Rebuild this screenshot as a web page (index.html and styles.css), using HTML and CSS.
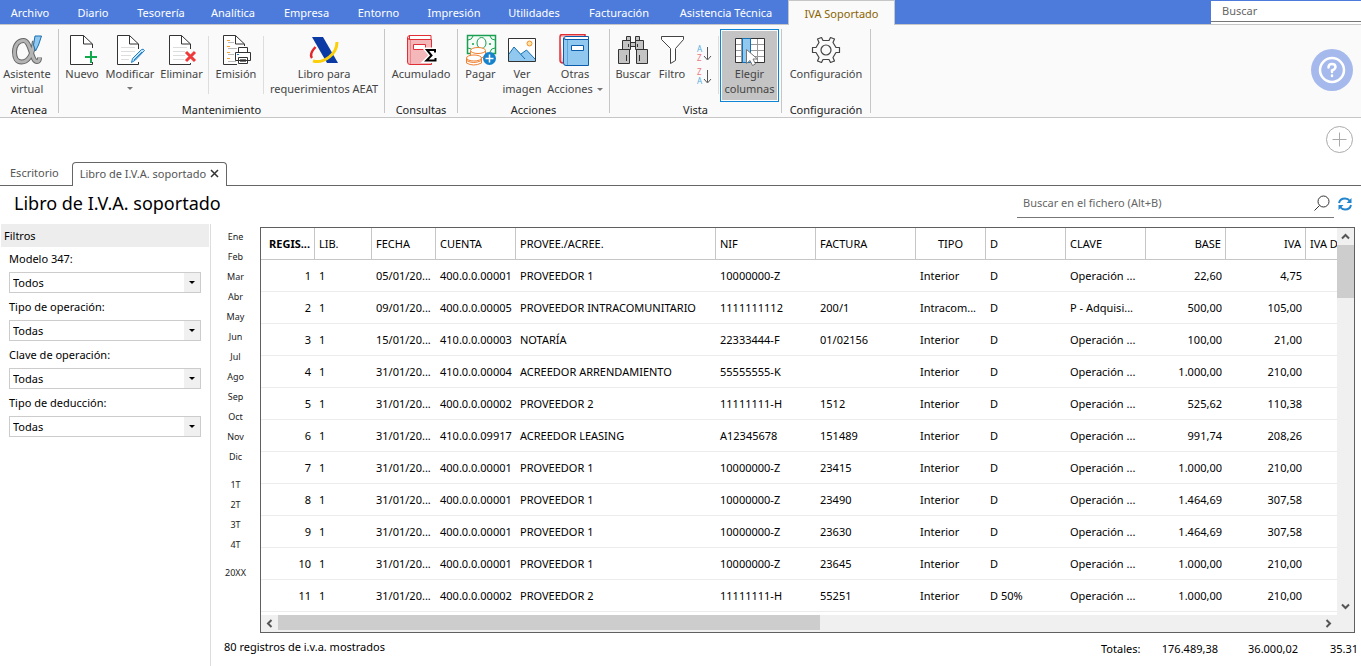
FILE: index.html
```html
<!DOCTYPE html>
<html lang="es">
<head>
<meta charset="utf-8">
<title>Libro de I.V.A. soportado</title>
<link rel="stylesheet" href="styles.css">
</head>
<body>
<header class="menubar">
  <nav class="menu">
    <a href="#">Archivo</a><a href="#">Diario</a><a href="#">Tesorería</a><a href="#">Analítica</a><a href="#">Empresa</a><a href="#">Entorno</a><a href="#">Impresión</a><a href="#">Utilidades</a><a href="#">Facturación</a><a href="#">Asistencia Técnica</a><a href="#" class="current">IVA Soportado</a>
  </nav>
  <input class="menu-search" type="search" placeholder="Buscar" aria-label="Buscar">
</header>

<section class="ribbon">
  <div class="group">
    <div class="tools tools-atenea">
      <button class="tool"><svg class="icon" viewBox="0 0 32 32" fill="none"><path d="M23.500 7C22 18 18 28 10.500 28C5.500 28 3.500 23.500 3.500 18C3.500 11 7.500 6.500 12.500 6.500C20 6.500 20 27.500 26 27.500C28 27.500 28.500 26 28.500 23.500" stroke="#666" stroke-width="5"/><path d="M23.500 7C22 18 18 28 10.500 28C5.500 28 3.500 23.500 3.500 18C3.500 11 7.500 6.500 12.500 6.500C20 6.500 20 27.500 26 27.500C28 27.500 28.500 26 28.500 24" stroke="#b4b4b4" stroke-width="3"/><path d="M24 2H30.500L27.500 11L24.500 17L22.500 11Z" fill="#90c8f0" stroke="#1a6fb0"/></svg><span>Asistente<br>virtual</span></button>
    </div>
    <h2>Atenea</h2>
  </div>
  <div class="group">
    <div class="tools tools-mant">
      <button class="tool"><svg class="icon" viewBox="0 0 32 32"><path d="M26.500 14V10L17.500 1.500H4.500V30.500H26.500V28M17.500 1.500V10H26.500" fill="#fff" stroke="#333"/><path d="M25 17v12M19 23h12" stroke="#12a84c" stroke-width="2"/></svg><span>Nuevo</span></button>
      <button class="tool"><svg class="icon" viewBox="0 0 32 32"><path d="M24.500 15V10L15.500 1.500H3.500V30.500H24.500V28M15.500 1.500V10H24.500" fill="#fff" stroke="#333"/><path d="M7 13.500h14M7 17.500h14M7 21.500h10M7 25.500h8" stroke="#ddd"/><path d="M17.500 28.500l1-4 9-9q2-1 3 1l-9 9.500zM20 26l8-8" fill="#c4e3f8" stroke="#2080c8"/></svg><span>Modificar</span><i class="caret"></i></button>
      <button class="tool"><svg class="icon" viewBox="0 0 32 32"><path d="M24.500 15V10L15.500 1.500H3.500V30.500H24.500V29M15.500 1.500V10H24.500" fill="#fff" stroke="#333"/><path d="M7 13.500h14M7 17.500h12M7 21.500h12M7 25.500h11" stroke="#ddd"/><path d="M20 18l9 9M29 18l-9 9" stroke="#ee3a3a" stroke-width="3"/></svg><span>Eliminar</span></button>
      <i class="rule"></i>
      <button class="tool"><svg class="icon" viewBox="0 0 32 32"><path d="M24.500 12V10L15.500 1.500H3.500V30.500H17M15.500 1.500V10H24.500" fill="#fff" stroke="#333"/><path d="M7 6.500h3M7 12.500h3M7 18.500h3M7 24.500h3" stroke="#f5a030" stroke-width="1"/><path d="M8 8.500h6M8 14.500h9M8 20.500h6M8 27.500h8" stroke="#bbb"/><path d="M18.500 18V13.500h9V18M15.500 18.500h15v8h-15z M18.500 23.500h9v6h-9z" fill="#fff" stroke="#333"/><path d="M20 25.500h6M20 27.500h6" stroke="#777"/><path d="M17 20.500h2" stroke="#2080c8"/></svg><span>Emisión</span></button>
      <i class="rule"></i>
      <button class="tool"><svg class="icon" viewBox="0 0 32 32"><path d="M4 3H15L30 29H19Z" fill="#0b3aa5"/><path d="M7.500 13Q1 20 4 24" fill="none" stroke="#e2272c" stroke-width="2.500"/><path d="M5 27C16 30 29 20 29 8" fill="none" stroke="#fbd00a" stroke-width="3"/></svg><span>Libro para<br>requerimientos AEAT</span></button>
    </div>
    <h2>Mantenimiento</h2>
  </div>
  <div class="group">
    <div class="tools tools-cons">
      <button class="tool"><svg class="icon" viewBox="0 0 32 32"><path d="M4.500 1.500H26V5.500H4.500zM2.500 4Q2.500 1.500 5 1.500M2.500 4Q3 5.500 5 5.500" fill="#fff" stroke="#e03036"/><path d="M2.500 4V28Q2.500 30.500 5 30.500H26.500V5.500H5Q3 5.500 2.500 4z" fill="#f5b8ba" stroke="#e03036"/><path d="M8.500 10.500h12v5h-12z" fill="#fff" stroke="#e03036"/><path d="M5.500 6v24" stroke="#ee8588"/><path d="M30 19V16H22L26.500 21.500L21.500 26.500H30.500V23.500" fill="none" stroke="#fff" stroke-width="5"/><path d="M30 18.500V16H22L26.500 21.500L21.500 26.500H30.500V24" fill="none" stroke="#000" stroke-width="2"/></svg><span>Acumulado</span></button>
    </div>
    <h2>Consultas</h2>
  </div>
  <div class="group">
    <div class="tools tools-acc">
      <button class="tool"><svg class="icon" viewBox="0 0 32 32"><path d="M2.500 1.500h28v18h-28z" fill="#f4fcf7" stroke="#18a050" stroke-width="1.500"/><ellipse cx="16.500" cy="9" rx="4.500" ry="5.500" fill="#fff" stroke="#18a050"/><path d="M3 6q4 0 5-4M30 6q-4 0-5-4M3 14q4 0 5 4M30 14q-4 0-5 4" fill="none" stroke="#18a050"/><circle cx="8" cy="10" r="1" fill="#18a050"/><circle cx="25" cy="10" r="1" fill="#18a050"/><g fill="#fff" stroke="#f08030"><path d="M5.500 17v5q7 5 15 0v-5z"/><ellipse cx="13" cy="16.500" rx="7.500" ry="3"/><path d="M1.500 24v5q7 4 15 0v-5z"/><ellipse cx="9" cy="24" rx="7.500" ry="3"/><path d="M1.500 26.500q7 4 15 0" fill="none"/></g><circle cx="24.500" cy="24.500" r="6.500" fill="#1682cc"/><path d="M20.500 24.500h8M24.500 20.500v8" stroke="#fff" stroke-width="1.500"/></svg><span>Pagar</span></button>
      <button class="tool"><svg class="icon" viewBox="0 0 32 32"><path d="M2.500 4.500h27v23h-27z" fill="#fff"/><path d="M3 20L8 13L15 20L20.500 16L29 25V27H3z" fill="#90c8f0"/><path d="M3 20L8 13L19 25M15 20L20.500 16L29 25" fill="none" stroke="#1470b0"/><circle cx="23.500" cy="9.500" r="2.500" fill="#ffe4a0" stroke="#f09030"/><path d="M2.500 4.500h27v23h-27z" fill="none" stroke="#333"/></svg><span>Ver<br>imagen</span></button>
      <button class="tool"><svg class="icon" viewBox="0 0 32 32"><path d="M1 3Q1 .500 3 .500H26V4M1 3V26Q1 29 4 29" fill="#f8b8ba" stroke="#e03036" stroke-width="1.500"/><path d="M4.500 5Q4.500 2.500 7 2.500H29.500V5.500H7Q5 5.500 4.500 4z" fill="#fff" stroke="#0b5cab"/><path d="M4.500 4V29Q4.500 31.500 7 31.500H29.500V5.500H7Q5 5.500 4.500 4z" fill="#90c8f0" stroke="#0b5cab"/><path d="M8.500 6v25" stroke="#5aa5dc"/><path d="M12.500 11.500h12v5h-12z" fill="#fff" stroke="#0b5cab"/></svg><span>Otras<br>Acciones<i class="caret caret-inline"></i></span></button>
    </div>
    <h2>Acciones</h2>
  </div>
  <div class="group">
    <div class="tools tools-vista">
      <button class="tool"><svg class="icon" viewBox="0 0 32 32"><g fill="#c4c4c4" stroke="#333"><path d="M9.500 2.500h4v4h-4zM18.500 2.500h4v4h-4zM5.500 6.500h8v9h-8zM18.500 6.500h8v9h-8zM13.500 8.500h5v4h-5zM1.500 15.500h11v14h-11zM19.500 15.500h11v14h-11z"/></g><path d="M9.500 21v6M22.500 21v6M11.500 10v3M20.500 10v3" stroke="#333"/></svg><span>Buscar</span></button>
      <button class="tool"><svg class="icon" viewBox="0 0 32 32"><path d="M5.500 2.500h22v3l-8 9v12l-5 3v-15l-9-9z" fill="#fff" stroke="#444"/></svg><span>Filtro</span></button>
      <div class="sorts">
        <button aria-label="Orden ascendente"><svg viewBox="0 0 16 20" width="16" height="20"><text x="1" y="8" fill="#58aee0">A</text><text x="1" y="17" fill="#ee7780">Z</text><path d="M11.500 3v12M8 12l3.500 4L15 12" fill="none" stroke="#555"/></svg></button>
        <button aria-label="Orden descendente"><svg viewBox="0 0 16 20" width="16" height="20"><text x="1" y="8" fill="#ee7780">Z</text><text x="1" y="17" fill="#58aee0">A</text><path d="M11.500 3v12M8 12l3.500 4L15 12" fill="none" stroke="#555"/></svg></button>
      </div>
      <i class="rule"></i>
      <button class="tool pressed"><svg class="icon" viewBox="0 0 32 32"><path d="M1.500 4.500h29v24h-29z" fill="#fff"/><path d="M1 10.500h30M1 16.500h30M1 22.500h30M7.500 4v24M23.500 4v24" stroke="#999"/><path d="M1.500 4.500h29v24h-29z" fill="none" stroke="#333"/><path d="M8.500 4.500h8v24h-8z" fill="#90c8f0" stroke="#1470b0"/><path d="M12.500 15.500v14l3.500-3 2.500 5 3-1.500-2.500-5h4.500z" fill="#fff" stroke="#777"/></svg><span>Elegir<br>columnas</span></button>
    </div>
    <h2>Vista</h2>
  </div>
  <div class="group">
    <div class="tools tools-conf">
      <button class="tool"><svg class="icon" viewBox="0 0 32 32"><g fill="none" stroke="#444" stroke-width="1.200" stroke-linejoin="round"><path d="M13 6.500H19L20.500 3.500L24.500 5L23 8.500L26 13.500H29.500V18.500H26L23 23.500L24.500 27L20.500 28.500L19 25.500H13L11.500 28.500L7.500 27L9 23.500L6 18.500H2.500V13.500H6L9 8.500L7.500 5L11.500 3.500Z"/><circle cx="16" cy="16" r="5"/></g></svg><span>Configuración</span></button>
    </div>
    <h2>Configuración</h2>
  </div>
  <button class="help" aria-label="Ayuda"><svg viewBox="0 0 28 28" width="28" height="28" fill="none" stroke="#fff" stroke-width="2.500" stroke-linecap="round"><circle cx="14" cy="14" r="12"/><path d="M10.500 11.500Q10.500 8 14 8Q17.500 8 17.500 11Q17.500 13 14 14.500V16M14 19.500V20"/></svg></button>
</section>

<div class="add-row"><button class="add" aria-label="Añadir"><svg viewBox="0 0 27 27" width="27" height="27" fill="none" stroke="#aaa"><circle cx="13.500" cy="13.500" r="13"/><path d="M6.500 13.500h14M13.500 6.500v14"/></svg></button></div>
<nav class="doc-tabs">
  <a href="#" class="doc-tab">Escritorio</a>
  <div class="doc-tab open"><a href="#">Libro de I.V.A. soportado</a><button aria-label="Cerrar"><svg viewBox="0 0 9 9" width="9" height="9"><path d="M1 1l7 7M8 1l-7 7" stroke="#333" stroke-width="1.500"/></svg></button></div>
</nav>

<div class="title-row">
  <h1>Libro de I.V.A. soportado</h1>
  <div class="file-search">
    <input type="search" placeholder="Buscar en el fichero (Alt+B)" aria-label="Buscar en el fichero">
    <svg viewBox="0 0 16 16" width="16" height="16" fill="none" stroke="#333"><circle cx="9.500" cy="6.500" r="5.500"/><path d="M5.500 10.500L.500 15.500"/></svg>
  </div>
  <button class="refresh" aria-label="Actualizar"><svg viewBox="0 0 14 14" width="14" height="14" fill="none" stroke="#2386cc" stroke-width="2"><path d="M1 6Q2 1.500 7 1.500Q10 1.500 12 4M13 8Q12 12.500 7 12.500Q4 12.500 2 10"/><path d="M13.500 1v5h-5zM.500 13V8h5z" fill="#2386cc" stroke="none"/></svg></button>
</div>

<div class="workspace">
  <aside class="filters">
    <h2>Filtros</h2>
    <label for="f1">Modelo 347:</label><div class="combo"><select id="f1"><option>Todos</option></select></div>
    <label for="f2">Tipo de operación:</label><div class="combo"><select id="f2"><option>Todas</option></select></div>
    <label for="f3">Clave de operación:</label><div class="combo"><select id="f3"><option>Todas</option></select></div>
    <label for="f4">Tipo de deducción:</label><div class="combo"><select id="f4"><option>Todas</option></select></div>
  </aside>
  <main class="content">
    <div class="book">
      <nav class="periods">
        <div><a href="#">Ene</a><a href="#">Feb</a><a href="#">Mar</a><a href="#">Abr</a><a href="#">May</a><a href="#">Jun</a><a href="#">Jul</a><a href="#">Ago</a><a href="#">Sep</a><a href="#">Oct</a><a href="#">Nov</a><a href="#">Dic</a></div>
        <div><a href="#">1T</a><a href="#">2T</a><a href="#">3T</a><a href="#">4T</a></div>
        <div><a href="#">20XX</a></div>
      </nav>
      <div class="grid-frame">
        <div class="grid-view">
          <table>
            <colgroup><col class="w54"><col class="w57"><col class="w64"><col class="w80"><col class="w200"><col class="w100"><col class="w100"><col class="w70"><col class="w80"><col class="w80"><col class="w80"><col class="w80"><col class="w80"></colgroup>
            <thead><tr><th class="num sorted">REGIS...</th><th>LIB.</th><th>FECHA</th><th>CUENTA</th><th>PROVEE./ACREE.</th><th>NIF</th><th>FACTURA</th><th class="mid">TIPO</th><th>D</th><th>CLAVE</th><th class="num">BASE</th><th class="num">IVA</th><th>IVA D</th></tr></thead>
            <tbody>
              <tr><td class="num">1</td><td>1</td><td>05/01/20...</td><td>400.0.0.00001</td><td>PROVEEDOR 1</td><td>10000000-Z</td><td></td><td>Interior</td><td>D</td><td>Operación ...</td><td class="num">22,60</td><td class="num">4,75</td><td></td></tr>
              <tr><td class="num">2</td><td>1</td><td>09/01/20...</td><td>400.0.0.00005</td><td>PROVEEDOR INTRACOMUNITARIO</td><td>1111111112</td><td>200/1</td><td>Intracom...</td><td>D</td><td>P - Adquisi...</td><td class="num">500,00</td><td class="num">105,00</td><td></td></tr>
              <tr><td class="num">3</td><td>1</td><td>15/01/20...</td><td>410.0.0.00003</td><td>NOTARÍA</td><td>22333444-F</td><td>01/02156</td><td>Interior</td><td>D</td><td>Operación ...</td><td class="num">100,00</td><td class="num">21,00</td><td></td></tr>
              <tr><td class="num">4</td><td>1</td><td>31/01/20...</td><td>410.0.0.00004</td><td>ACREEDOR ARRENDAMIENTO</td><td>55555555-K</td><td></td><td>Interior</td><td>D</td><td>Operación ...</td><td class="num">1.000,00</td><td class="num">210,00</td><td></td></tr>
              <tr><td class="num">5</td><td>1</td><td>31/01/20...</td><td>400.0.0.00002</td><td>PROVEEDOR 2</td><td>11111111-H</td><td>1512</td><td>Interior</td><td>D</td><td>Operación ...</td><td class="num">525,62</td><td class="num">110,38</td><td></td></tr>
              <tr><td class="num">6</td><td>1</td><td>31/01/20...</td><td>410.0.0.09917</td><td>ACREEDOR LEASING</td><td>A12345678</td><td>151489</td><td>Interior</td><td>D</td><td>Operación ...</td><td class="num">991,74</td><td class="num">208,26</td><td></td></tr>
              <tr><td class="num">7</td><td>1</td><td>31/01/20...</td><td>400.0.0.00001</td><td>PROVEEDOR 1</td><td>10000000-Z</td><td>23415</td><td>Interior</td><td>D</td><td>Operación ...</td><td class="num">1.000,00</td><td class="num">210,00</td><td></td></tr>
              <tr><td class="num">8</td><td>1</td><td>31/01/20...</td><td>400.0.0.00001</td><td>PROVEEDOR 1</td><td>10000000-Z</td><td>23490</td><td>Interior</td><td>D</td><td>Operación ...</td><td class="num">1.464,69</td><td class="num">307,58</td><td></td></tr>
              <tr><td class="num">9</td><td>1</td><td>31/01/20...</td><td>400.0.0.00001</td><td>PROVEEDOR 1</td><td>10000000-Z</td><td>23630</td><td>Interior</td><td>D</td><td>Operación ...</td><td class="num">1.464,69</td><td class="num">307,58</td><td></td></tr>
              <tr><td class="num">10</td><td>1</td><td>31/01/20...</td><td>400.0.0.00001</td><td>PROVEEDOR 1</td><td>10000000-Z</td><td>23645</td><td>Interior</td><td>D</td><td>Operación ...</td><td class="num">1.000,00</td><td class="num">210,00</td><td></td></tr>
              <tr><td class="num">11</td><td>1</td><td>31/01/20...</td><td>400.0.0.00002</td><td>PROVEEDOR 2</td><td>11111111-H</td><td>55251</td><td>Interior</td><td>D 50%</td><td>Operación ...</td><td class="num">1.000,00</td><td class="num">210,00</td><td></td></tr>
            </tbody>
          </table>
        </div>
        <div class="vscroll">
          <button aria-label="Subir"><svg viewBox="0 0 9 9" width="9" height="9"><path d="M1 6.500l3.500-3.500L8 6.500"/></svg></button>
          <div class="track"><div class="thumb"></div></div>
          <button aria-label="Bajar"><svg viewBox="0 0 9 9" width="9" height="9"><path d="M1 2.500L4.500 6 8 2.500"/></svg></button>
        </div>
        <div class="hscroll">
          <button aria-label="Izquierda"><svg viewBox="0 0 9 9" width="9" height="9"><path d="M6.500 1L3 4.500 6.500 8"/></svg></button>
          <div class="track"><div class="thumb"></div></div>
          <button aria-label="Derecha"><svg viewBox="0 0 9 9" width="9" height="9"><path d="M2.500 1L6 4.500 2.500 8"/></svg></button>
        </div>
        <div class="corner"></div>
      </div>
    </div>
    <footer class="status">
      <span>80 registros de i.v.a. mostrados</span>
      <div class="totals"><span>Totales:</span><span>176.489,38</span><span>36.000,02</span><span class="cut">35.31</span></div>
    </footer>
  </main>
</div>
</body>
</html>
```
FILE: styles.css
```css
* { box-sizing: border-box; }
body { margin: 0; min-height: 100vh; display: flex; flex-direction: column; background: #fff; color: #000; font: 11px/15px "Noto Sans", "Open Sans", sans-serif; overflow-x: hidden; }
button { margin: 0; padding: 0; border: 0; background: none; font: inherit; color: inherit; }
a { color: inherit; text-decoration: none; }
h1, h2 { margin: 0; font-weight: normal; }
h2 { font-size: 11px; }
svg { display: block; }
input { font: inherit; outline: 0; border: 0; background: none; }
input::placeholder { color: #666; opacity: 1; }

.menubar { display: flex; justify-content: space-between; align-items: flex-start; background: #4d7bdc; height: 25px; border-bottom: 1px solid #c6c6c6; }
.menu { display: grid; grid-template-columns: 60px 66px 70px 74px 73px 71px 80px 80px 90px 124px 107px; height: 25px; color: #fff; }
.menu a { display: flex; align-items: center; justify-content: center; white-space: nowrap; }
.menu .current { background: #fafafa; border: 1px solid #c6c6c6; border-bottom: 0; color: #8a6400; }
.menu-search { width: 150px; height: 24px; padding: 0 11px 4px; border-top: 1px solid #4d7bdc; background: linear-gradient(#777, #777) 0 20px / 100% 1px no-repeat #fff; }

.ribbon { display: flex; height: 93px; padding-top: 4px; background: #fafafa; border-bottom: 1px solid #c6c6c6; color: #444; }
.group { display: flex; flex-direction: column; height: 88px; padding-right: 1px; background: linear-gradient(#c6c6c6, #c6c6c6) right top / 1px 84px no-repeat; }
.group h2 { margin-top: auto; text-align: center; color: #222; }
.tools { display: grid; }
.tools-atenea { grid-template-columns: 54px; padding-right: 4px; }
.tools-mant { grid-template-columns: 46px 50px 53px 1px 54px 1px 120px; }
.tools-cons { grid-template-columns: 72px; }
.tools-acc { grid-template-columns: 45px 38px 68px; }
.tools-vista { grid-template-columns: 40px 36px 26px 1px 59px; padding: 0 2px 0 3px; column-gap: 1px; }
.tools-conf { grid-template-columns: 88px; }
.tool { display: flex; flex-direction: column; align-items: center; height: 73px; padding-top: 5px; white-space: nowrap; text-align: center; }
.tool.pressed { background: #c4c4c4; border: 1px solid #0e86d4; padding-top: 4px; box-shadow: inset 0 0 0 1px #fafafa; }
.icon { width: 32px; height: 32px; flex: none; }
.rule { width: 1px; height: 58px; margin-top: 7px; background: #ddd; }
.caret { width: 0; border: 3px solid transparent; border-top-color: #777; border-bottom: 0; margin-top: 6px; }
.caret-inline { display: inline-block; margin: 0 0 2px 4px; }
.sorts { display: flex; flex-direction: column; gap: 3px; padding: 15px 0 0 5px; font-size: 8px; }
.help { width: 42px; height: 42px; margin: 20px 8px 0 auto; border-radius: 50%; background: #a5b9ec; display: grid; place-items: center; }

.add-row { display: flex; justify-content: flex-end; height: 44px; padding: 8px 8px 0; }
.add { height: 27px; }
.doc-tabs { display: flex; height: 24px; padding-left: 10px; color: #555; background: linear-gradient(#666, #666) bottom / 100% 1px no-repeat; }
.doc-tab { line-height: 21px; }
.doc-tab.open { display: flex; align-items: center; gap: 4px; margin-left: 13px; padding: 0 7px 2px; border: 1px solid #666; border-bottom: 0; border-radius: 4px 4px 0 0; background: #fff; }
.title-row { display: flex; align-items: flex-start; height: 38px; padding: 4px 9px 0 14px; }
h1 { font-size: 18px; line-height: 27px; margin-right: auto; }
.file-search { display: flex; align-items: center; width: 317px; height: 28px; padding: 0 4px 2px 6px; border-bottom: 1px solid #777; }
.file-search input { flex: 1; padding: 0; }
.refresh { margin: 7px 0 0 4px; }

.workspace { display: flex; flex: 1; }
.filters { flex: none; width: 211px; padding: 0 9px; border-right: 1px solid #ddd; }
.filters h2 { margin: 0 -8px 1px; padding: 0 3px; line-height: 23px; background: #ededed; }
.filters label { display: block; line-height: 21px; padding-bottom: 3px; }
.combo { position: relative; width: 192px; height: 21px; margin-bottom: 3px; }
.combo select { appearance: none; width: 100%; height: 100%; padding: 0 3px; border: 1px solid #ccc; border-radius: 0; color: #000; font: inherit; background: linear-gradient(#f0f0f0, #f0f0f0) right / 16px 100% no-repeat #fff; }
.combo::after { content: ""; position: absolute; right: 6px; top: 9px; border: 3px solid transparent; border-top-color: #000; border-bottom: 0; pointer-events: none; }
.content { flex: 1; min-width: 0; }
.book { display: flex; padding: 3px 6px 0 0; }
.periods { flex: none; width: 49px; font-size: 9px; text-align: center; color: #222; }
.periods div { margin-bottom: 8px; }
.periods a { display: block; line-height: 20px; }
.grid-frame { flex: 1; min-width: 0; display: grid; grid-template-columns: minmax(0, 1fr) 17px; border: 1px solid #606060; }
.grid-view { overflow: hidden; padding-bottom: 3px; }
table { width: 1125px; table-layout: fixed; border-collapse: separate; border-spacing: 0; }
.w54 { width: 54px; } .w57 { width: 57px; } .w64 { width: 64px; } .w70 { width: 70px; } .w80 { width: 80px; } .w100 { width: 100px; } .w200 { width: 200px; }
th, td { height: 32px; padding: 0 4px; text-align: left; font-weight: normal; white-space: nowrap; border-bottom: 1px solid #ececec; }
th { border-right: 1px solid #c6c6c6; border-bottom-color: #c6c6c6; }
.num { text-align: right; }
.mid { text-align: center; }
.sorted { font-weight: bold; }
.vscroll { display: flex; flex-direction: column; background: #f0f0f0; }
.hscroll { display: flex; height: 17px; background: #f0f0f0; }
.vscroll button, .hscroll button { flex: none; width: 17px; height: 17px; display: grid; place-items: center; }
.vscroll path, .hscroll path { fill: none; stroke: #555; stroke-width: 2; }
.track { flex: 1; }
.track .thumb { background: #cdcdcd; }
.vscroll .thumb { height: 15%; }
.hscroll .thumb { width: 52%; height: 15px; }
.corner { background: #f0f0f0; }
.status { display: flex; justify-content: space-between; padding: 6px 4px 0 13px; overflow: hidden; }
.totals { display: grid; grid-template-columns: 39px 78px 80px 59px; padding-top: 2px; text-align: right; }
.totals .cut { width: 27px; margin-left: auto; text-align: left; }
```
